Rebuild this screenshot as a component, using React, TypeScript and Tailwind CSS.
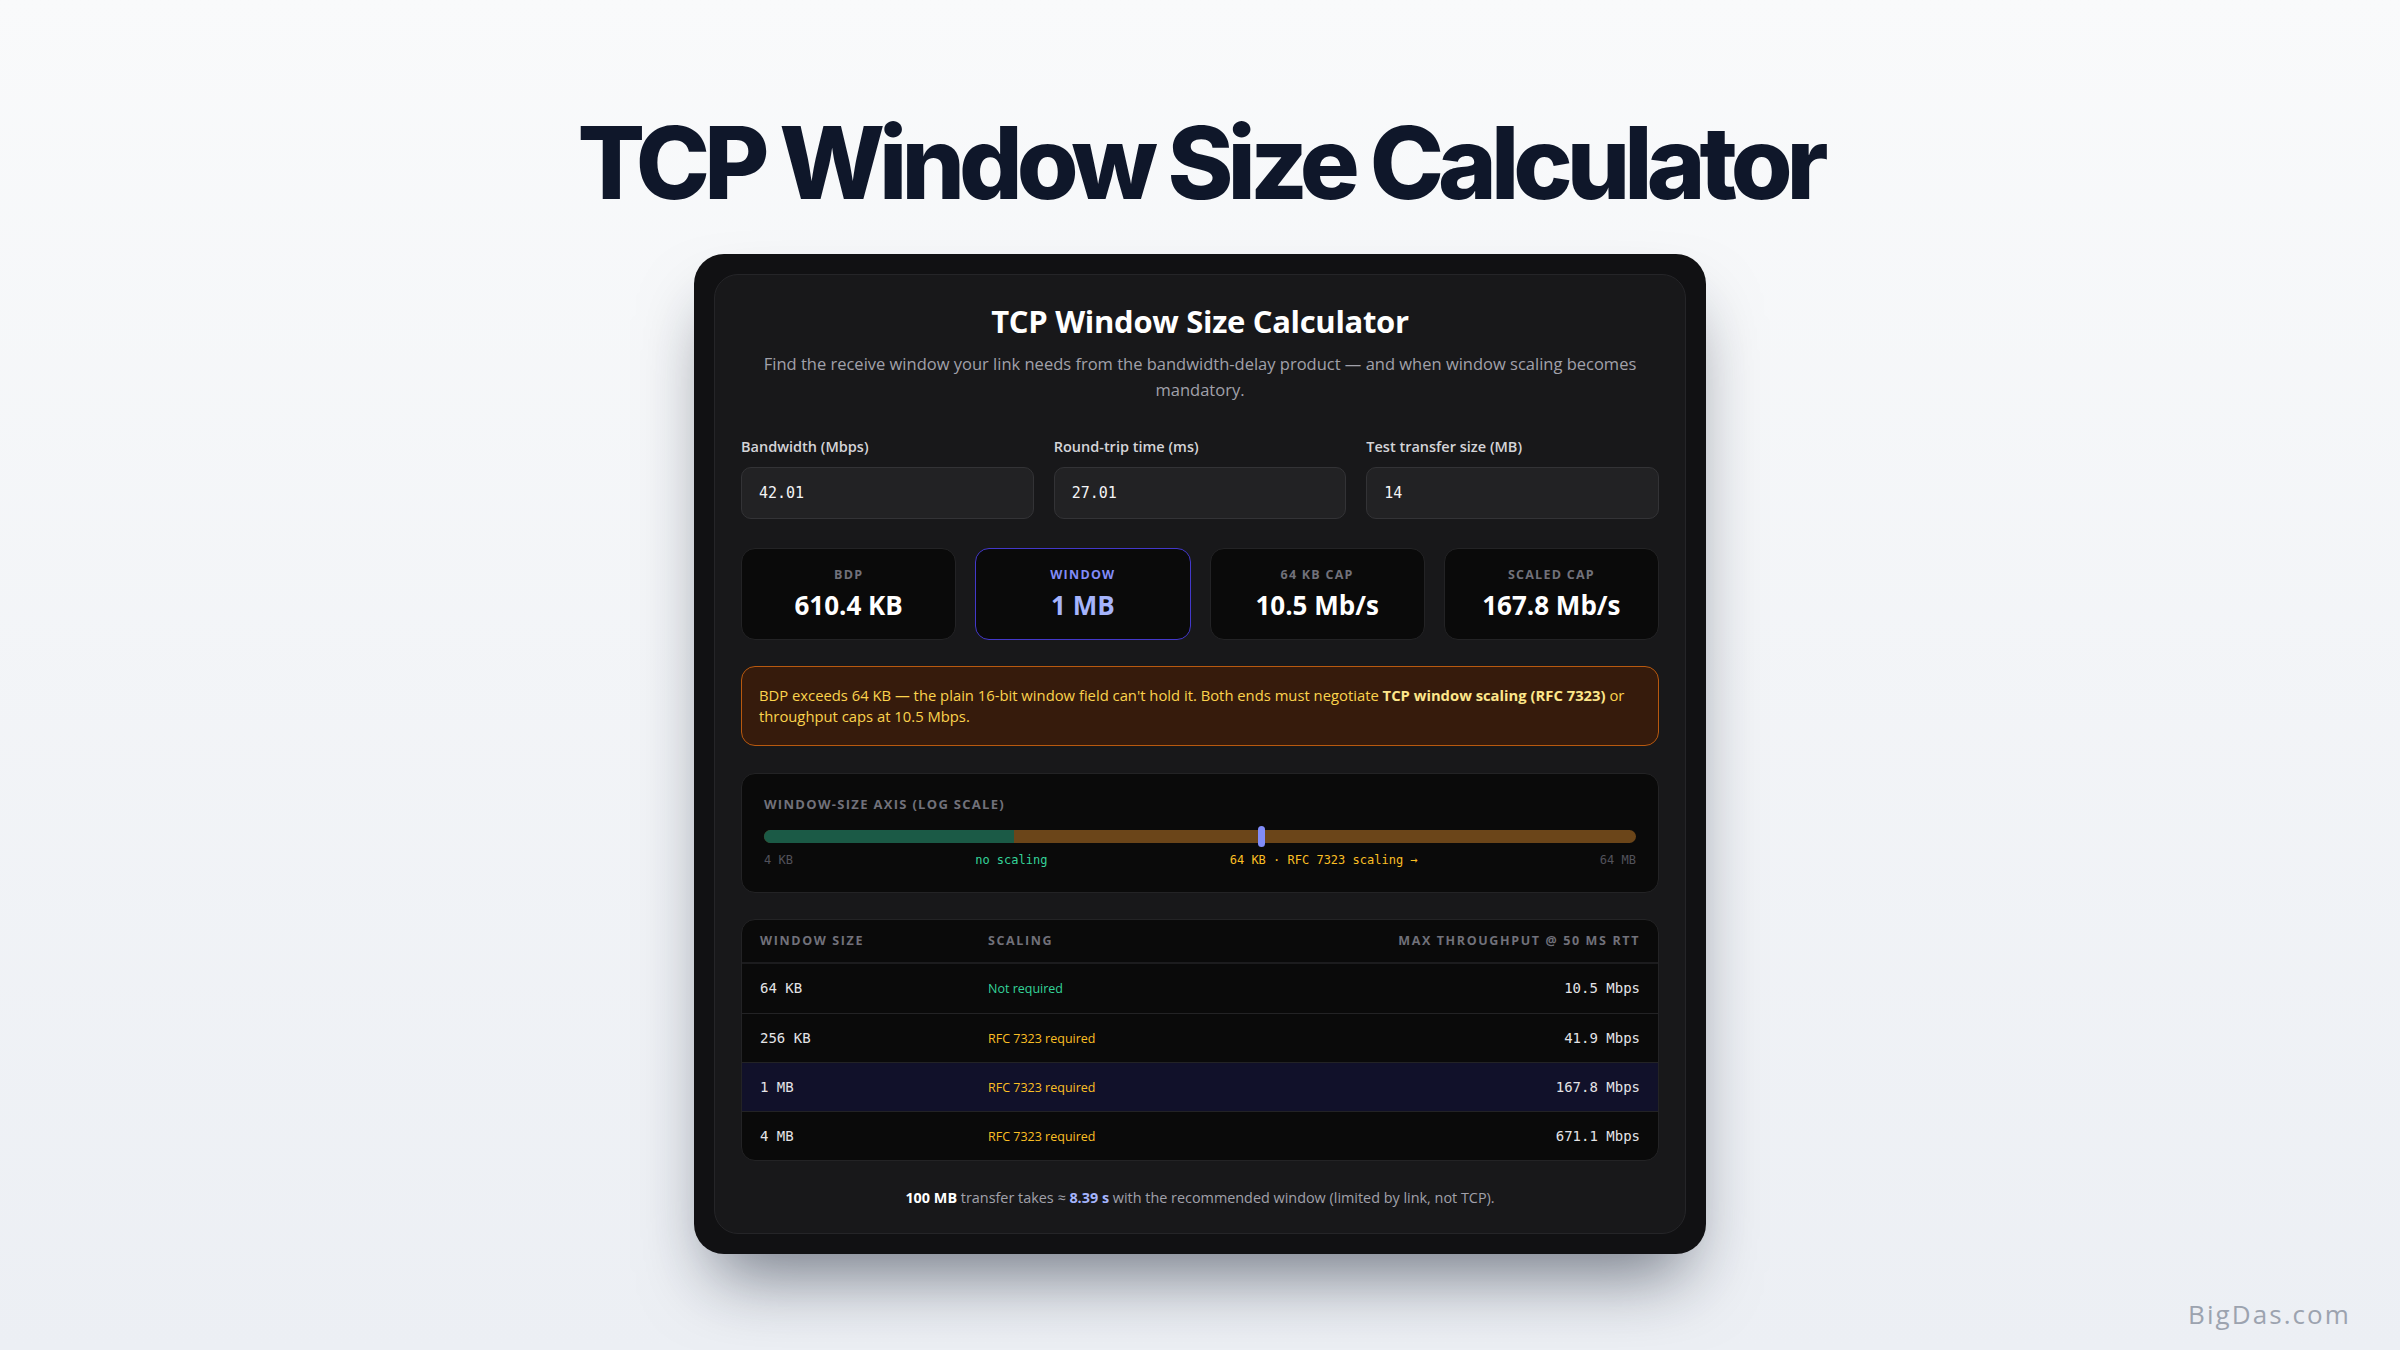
import React from "react";

const sans = "font-['Open_Sans','Noto_Sans',sans-serif]";
const mono = "font-['DejaVu_Sans_Mono','Liberation_Mono',monospace]";

interface Stat {
    label: string;
    value: string;
    accent?: boolean;
}

const stats: Stat[] = [
    { label: "BDP", value: "610.4 KB" },
    { label: "Window", value: "1 MB", accent: true },
    { label: "64 KB cap", value: "10.5 Mb/s" },
    { label: "Scaled cap", value: "167.8 Mb/s" },
];

const rows = [
    { size: "64 KB", scaling: "Not required", ok: true, tput: "10.5 Mbps" },
    { size: "256 KB", scaling: "RFC 7323 required", ok: false, tput: "41.9 Mbps" },
    { size: "1 MB", scaling: "RFC 7323 required", ok: false, tput: "167.8 Mbps", active: true },
    { size: "4 MB", scaling: "RFC 7323 required", ok: false, tput: "671.1 Mbps" },
];

const inputs = [
    { label: "Bandwidth (Mbps)", value: "42.01" },
    { label: "Round-trip time (ms)", value: "27.01" },
    { label: "Test transfer size (MB)", value: "14" },
];

export default function App() {
    return (
        <div className="relative w-full h-[1350px] overflow-hidden bg-linear-to-b from-[#f9fafb] to-[#eceff4] flex flex-col items-center pt-[113px]">
            <h1 className="font-['Inter',sans-serif] font-extrabold text-[100px] leading-none tracking-[-0.06em] text-[#0f172a]">
                TCP Window Size Calculator
            </h1>

            <div className="mt-[41px] w-[1012px] p-5 rounded-[30px] bg-[#111113] shadow-[0_40px_70px_-20px_rgba(15,23,42,0.55)]">
                <div className={`${sans} rounded-[24px] bg-[#18181a] border border-[#252528] px-[26px] pt-7 pb-[25px]`}>
                    <h2 className="text-center text-[31px] leading-9 font-bold tracking-[-0.01em] text-white">TCP Window Size Calculator</h2>
                    <p className="mt-3 mx-auto max-w-[900px] text-center text-[16.5px] leading-[26px] text-[#a1a1aa]">
                        Find the receive window your link needs from the bandwidth-delay product — and when window scaling becomes mandatory.
                    </p>

                    <div className="mt-[34px] grid grid-cols-3 gap-5">
                        {inputs.map((f) => (
                            <label key={f.label} className="flex flex-col gap-2.5">
                                <span className="text-[14.5px] leading-5 font-semibold text-[#d4d4d8]">{f.label}</span>
                                <span className={`${mono} h-[52px] rounded-[10px] bg-[#222224] border border-[#333336] px-[17px] flex items-center text-[15px] text-[#f4f4f5]`}>
                                    {f.value}
                                </span>
                            </label>
                        ))}
                    </div>

                    <div className="mt-[29px] grid grid-cols-4 gap-[19px]">
                        {stats.map((s) => (
                            <div
                                key={s.label}
                                className={`rounded-[14px] bg-[#0a0a0a] border py-[18px] flex flex-col items-center gap-1.5 ${s.accent ? "border-[#4338ca]" : "border-[#232325]"}`}
                            >
                                <div className={`text-[12.5px] leading-4 font-bold uppercase tracking-[0.1em] ${s.accent ? "text-[#818cf8]" : "text-[#71717a]"}`}>
                                    {s.label}
                                </div>
                                <div className={`text-[26px] leading-8 font-bold ${s.accent ? "text-[#a5b4fc]" : "text-white"}`}>{s.value}</div>
                            </div>
                        ))}
                    </div>

                    <div className="mt-[26px] rounded-[14px] border border-[#b8590f] bg-[#361b0c] px-[17px] py-[18px] text-[14.8px] leading-[21px] font-medium text-[#fcd34d]">
                        <span>BDP exceeds 64 KB — the plain 16-bit window field can't hold it. Both ends must negotiate </span>
                        <strong className="font-bold text-[#fde68a]">TCP window scaling (RFC 7323)</strong>
                        <span> or </span>
                        <span>throughput caps at 10.5 Mbps.</span>
                    </div>

                    <div className="mt-[27px] rounded-[14px] bg-[#0a0a0a] border border-[#232325] px-[22px] pt-[22px] pb-[24px]">
                        <div className="text-[13px] leading-4 font-bold uppercase tracking-[0.1em] text-[#71717a]">Window-size axis (log scale)</div>
                        <div className="relative mt-[18px] h-[13px] rounded-full bg-[#6b4519] flex">
                            <div className="w-[250px] h-full rounded-l-full bg-[#1b5a46]" />
                            <div className="absolute left-[494px] top-[-4px] w-[7px] h-[21px] rounded-full bg-[#818cf8]" />
                        </div>
                        <div className={`${mono} mt-[9px] flex justify-between text-[12px] leading-4`}>
                            <span className="text-[#52525b]">4 KB</span>
                            <span className="text-[#34d399]">no scaling</span>
                            <span className="text-[#fbbf24]">64 KB · RFC 7323 scaling →</span>
                            <span className="text-[#52525b]">64 MB</span>
                        </div>
                    </div>

                    <div className="mt-[26px] rounded-[14px] bg-[#0a0a0a] border border-[#232325] overflow-hidden">
                        <div className="flex items-center h-[44px] px-[18px] border-b-2 border-[#1c1c1e] text-[12.5px] font-bold uppercase tracking-[0.13em] text-[#71717a]">
                            <div className="w-[210px]">Window size</div>
                            <div className="flex-1 pl-[18px]">Scaling</div>
                            <div className="text-right">Max throughput @ 50 ms RTT</div>
                        </div>
                        {rows.map((r, i) => (
                            <div
                                key={r.size}
                                className={`flex items-center h-[49px] px-[18px] ${i > 0 ? "border-t border-[#232325]" : ""} ${r.active ? "bg-[#11112a]" : ""}`}
                            >
                                <div className={`${mono} w-[210px] text-[14px] text-[#e4e4e7]`}>{r.size}</div>
                                <div className={`flex-1 pl-[18px] pt-0.5 text-[12.5px] font-medium ${r.ok ? "text-[#34d399]" : "text-[#fbbf24]"}`}>{r.scaling}</div>
                                <div className={`${mono} text-right text-[14px] text-[#e4e4e7]`}>{r.tput}</div>
                            </div>
                        ))}
                    </div>

                    <p className="mt-[27px] text-center text-[14.4px] leading-5 text-[#a1a1aa]">
                        <strong className="font-bold text-white">100 MB</strong> transfer takes ≈{" "}
                        <strong className="font-bold text-[#a5b4fc]">8.39 s</strong> with the recommended window (limited by link, not TCP).
                    </p>
                </div>
            </div>

            <div className="absolute right-[49px] bottom-[16px] font-['Open_Sans',sans-serif] font-medium text-[26px] tracking-[0.08em] text-[#9ca3af]">
                BigDas.com
            </div>
        </div>
    );
}
